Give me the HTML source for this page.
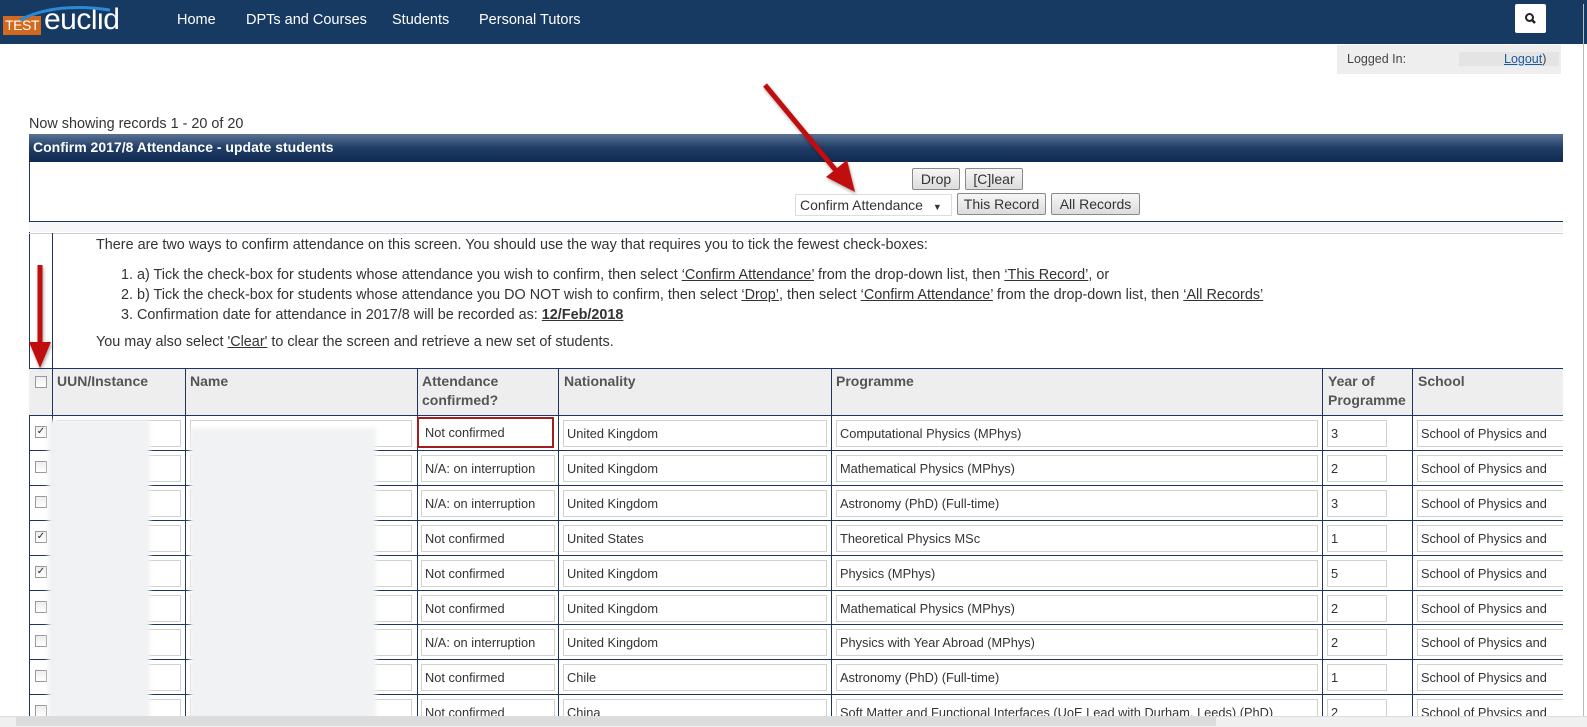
<!DOCTYPE html>
<html><head><meta charset="utf-8"><style>
*{box-sizing:border-box;margin:0;padding:0}
body{width:1587px;height:727px;overflow:hidden;background:#fff;font-family:"Liberation Sans",sans-serif;font-size:13.5px;color:#333;position:relative}
.a{position:absolute}
nav{position:absolute;left:0;top:0;width:1587px;height:44px;background:#173a62}
nav .m{position:absolute;top:12px;color:#fff;font-size:14.5px}
.hdr{left:29px;top:134px;width:1534px;height:28px;background:linear-gradient(#5a7294,#1f3d66 50%,#102a52);color:#fff;font-weight:bold;font-size:14px;padding:5px 4px}
.btn{position:absolute;height:22px;border:1px solid #8a8a8a;border-radius:2px;background:linear-gradient(#f6f6f6,#dcdcdc);font-size:14px;text-align:center;line-height:20px;color:#333}
.vl{position:absolute;width:1px;background:#1d3560}
.hl{position:absolute;height:1px;background:#1d3560}
.th{position:absolute;top:372px;font-weight:bold;color:#555;font-size:14px;line-height:19px}
.in{position:absolute;height:27px;border:1px solid #d0d0d0;background:#fff;font-size:12.8px;line-height:25px;padding-left:3px;white-space:nowrap;overflow:hidden;color:#333}
.cb{position:absolute;left:35px;width:12px;height:12px;border:1px solid #999;background:linear-gradient(#eee,#fff);font-size:10px;line-height:10px;color:#224;text-align:center}
.blur{position:absolute;background:#f1f2f3;filter:blur(2px)}
.tx{font-size:14.4px}
u{text-decoration:underline}
</style></head><body>
<nav>
<div class="a" style="left:3px;top:16px;width:38px;height:19px;background:#d2691e;color:#fff;font-size:14px;line-height:19px;text-align:center;letter-spacing:-0.5px">TEST</div>
<div class="a" style="left:44px;top:3px;color:#fff;font-size:30px;letter-spacing:-0.5px">euclid</div>
<svg class="a" style="left:15px;top:2px" width="110" height="20"><path d="M5 18 Q40 0 95 8" stroke="#2a8ad6" stroke-width="3" fill="none"/></svg>
<span class="m" style="left:177px">Home</span>
<span class="m" style="left:246px">DPTs and Courses</span>
<span class="m" style="left:392px">Students</span>
<span class="m" style="left:479px">Personal Tutors</span>
<div class="a" style="left:1515px;top:4px;width:31px;height:29px;background:#fff;border-radius:2px"><svg width="31" height="29"><circle cx="14.5" cy="13.5" r="3.5" stroke="#222" stroke-width="2" fill="none"/><path d="M17 16 L20 19" stroke="#222" stroke-width="2.5"/></svg></div>
</nav>
<div class="a" style="left:1337px;top:45px;width:224px;height:29px;background:#eeeeee;font-size:12.5px;padding:7px 10px;color:#444">Logged In:<span class="a" style="left:122px;top:7px;width:100px;height:14px;background:#e4e4e4"></span><span class="a" style="left:167px;top:7px;color:#1a5aa0"><u>Logout</u><span style="color:#444">)</span></span></div>
<div class="a" style="left:1583px;top:4px;width:1px;height:712px;background:#bbb"></div>
<div class="a tx" style="left:29px;top:116px">Now showing records 1 - 20 of 20</div>
<div class="a hdr">Confirm 2017/8 Attendance - update students</div>
<div class="vl" style="left:29px;top:162px;height:554px"></div>
<div class="btn" style="left:912px;top:168px;width:48px">Drop</div>
<div class="btn" style="left:965px;top:168px;width:58px">[C]lear</div>
<div class="a" style="left:795px;top:194px;width:157px;height:22px;border:1px solid #ddd;font-size:14px;line-height:20px;padding-left:4px">Confirm Attendance <span style="font-size:9px;margin-left:6px">▼</span></div>
<div class="btn" style="left:957px;top:193px;width:89px">This Record</div>
<div class="btn" style="left:1051px;top:193px;width:89px">All Records</div>
<div class="hl" style="left:29px;top:221px;width:1534px"></div>
<div class="a" style="left:29px;top:222px;width:1534px;height:10px;background:#f7f7f7"></div>
<div class="hl" style="left:29px;top:233px;width:1534px;background:#ccd"></div>
<div class="vl" style="left:52px;top:233px;height:135px"></div>
<div class="a tx" style="left:96px;top:236px;line-height:19.5px">There are two ways to confirm attendance on this screen. You should use the way that requires you to tick the fewest check-boxes:</div>
<div class="a tx" style="left:121px;top:265px;line-height:20px">1. a) Tick the check-box for students whose attendance you wish to confirm, then select <u>‘Confirm Attendance’</u> from the drop-down list, then <u>‘This Record’</u>, or<br>2. b) Tick the check-box for students whose attendance you DO NOT wish to confirm, then select <u>‘Drop’</u>, then select <u>‘Confirm Attendance’</u> from the drop-down list, then <u>‘All Records’</u><br>3. Confirmation date for attendance in 2017/8 will be recorded as: <b><u>12/Feb/2018</u></b></div>
<div class="a tx" style="left:96px;top:334px">You may also select <u>'Clear'</u> to clear the screen and retrieve a new set of students.</div>
<div class="a" style="left:29px;top:368px;width:1534px;height:47px;background:#eeeeee"></div>
<div class="hl" style="left:29px;top:368px;width:1534px"></div>
<div class="cb" style="top:376px"></div>
<div class="th" style="left:57px">UUN/Instance</div>
<div class="th" style="left:190px">Name</div>
<div class="th" style="left:422px">Attendance<br>confirmed?</div>
<div class="th" style="left:564px">Nationality</div>
<div class="th" style="left:836px">Programme</div>
<div class="th" style="left:1328px">Year of<br>Programme</div>
<div class="th" style="left:1418px">School</div>
<div class="vl" style="left:52px;top:368px;height:348px"></div>
<div class="vl" style="left:185px;top:368px;height:348px"></div>
<div class="vl" style="left:417px;top:368px;height:348px"></div>
<div class="vl" style="left:558px;top:368px;height:348px"></div>
<div class="vl" style="left:831px;top:368px;height:348px"></div>
<div class="vl" style="left:1322px;top:368px;height:348px"></div>
<div class="vl" style="left:1412px;top:368px;height:348px"></div>
<div id="rows"></div>
<script>
var d=[["✓","Not confirmed","United Kingdom","Computational Physics (MPhys)","3"],["","N/A: on interruption","United Kingdom","Mathematical Physics (MPhys)","2"],["","N/A: on interruption","United Kingdom","Astronomy (PhD) (Full-time)","3"],["✓","Not confirmed","United States","Theoretical Physics MSc","1"],["✓","Not confirmed","United Kingdom","Physics (MPhys)","5"],["","Not confirmed","United Kingdom","Mathematical Physics (MPhys)","2"],["","N/A: on interruption","United Kingdom","Physics with Year Abroad (MPhys)","2"],["","Not confirmed","Chile","Astronomy (PhD) (Full-time)","1"],["","Not confirmed","China","Soft Matter and Functional Interfaces (UoE Lead with Durham, Leeds) (PhD)","2"]];
var h="",tops=[415,450,485,520,555,590,624,659,694];
for(var i=0;i<d.length;i++){var t=tops[i],r=d[i];
h+='<div class="hl" style="left:29px;top:'+t+'px;width:1534px"></div>';
h+='<div class="cb" style="top:'+(t+11)+'px">'+r[0]+'</div>';
h+='<div class="in" style="left:57px;top:'+(t+5)+'px;width:124px"></div>';
h+='<div class="in" style="left:190px;top:'+(t+5)+'px;width:222px"></div>';
h+='<div class="in" style="left:421px;top:'+(t+5)+'px;width:134px'+(i==0?';border:2px solid #a51c1c;left:417px;top:'+(t+2)+'px;width:137px;height:31px;line-height:27px;padding-left:6px':'')+'">'+r[1]+'</div>';
h+='<div class="in" style="left:563px;top:'+(t+5)+'px;width:264px">'+r[2]+'</div>';
h+='<div class="in" style="left:836px;top:'+(t+5)+'px;width:482px">'+r[3]+'</div>';
h+='<div class="in" style="left:1327px;top:'+(t+5)+'px;width:60px">'+r[4]+'</div>';
h+='<div class="in" style="left:1417px;top:'+(t+5)+'px;width:146px;border-right:none">School of Physics and</div>';}
document.getElementById("rows").innerHTML=h;
</script>
<div class="blur" style="left:48px;top:420px;width:102px;height:300px"></div>
<div class="blur" style="left:190px;top:428px;width:186px;height:292px"></div>
<div class="a" style="left:0;top:716px;width:1587px;height:11px;background:#f0f0f0;border-top:1px solid #ddd"></div>
<div class="a" style="left:16px;top:717px;width:1200px;height:9px;background:#dcdcdc"></div>
<svg class="a" style="left:0;top:0" width="1587" height="727">
<defs><filter id="s"><feDropShadow dx="1" dy="2" stdDeviation="1.5" flood-opacity="0.35"/></filter></defs>
<g filter="url(#s)" fill="#c00d0d" stroke="#c00d0d">
<line x1="765" y1="85" x2="838" y2="173" stroke-width="5"/>
<polygon points="855,192 826,177 847,160" stroke="none"/>
<line x1="40" y1="265" x2="40" y2="345" stroke-width="5"/>
<polygon points="29,342 51,342 40,368" stroke="none"/>
</g></svg>
</body></html>
